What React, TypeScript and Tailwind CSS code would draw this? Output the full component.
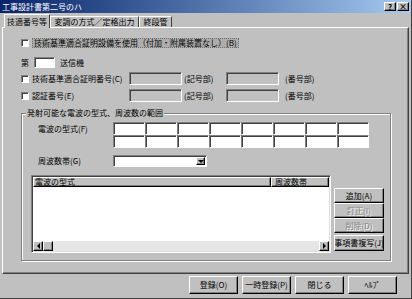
import React from 'react';

const raised =
  'bg-[#c0c0c0] border border-t-white border-l-white border-b-black border-r-black shadow-[inset_-1px_-1px_0_#808080]';
const sunken =
  'border border-t-[#808080] border-l-[#808080] border-b-white border-r-white shadow-[inset_1px_1px_0_#404040]';
const disabledText = 'text-[#808080] [text-shadow:1px_1px_0_#fff]';

const Check = () => <span className={`w-[8px] h-[8px] shrink-0 bg-white ${sunken}`} />;

const Arrow = ({ dir }: { dir: 'left' | 'right' | 'down' }) => {
  const pts = dir === 'left' ? '3,0 3,6 0,3' : dir === 'right' ? '0,0 0,6 3,3' : '0,0 6,0 3,3';
  const w = dir === 'down' ? 6 : 3;
  const h = dir === 'down' ? 3 : 6;
  return (
    <svg width={w} height={h} viewBox={`0 0 ${w} ${h}`}>
      <polygon points={pts} fill="#000" />
    </svg>
  );
};

const TitleBar = () => (
  <div className="h-[13px] flex items-center justify-between bg-gradient-to-r from-[#0a246a] to-[#a6caf0] pl-[2px] pr-[2px]">
    <span className="text-white text-[8px]">工事設計書第二号のハ</span>
    <div className="flex">
      <span className={`w-[12px] h-[9px] flex items-center justify-center text-[8px] font-bold ${raised}`}>?</span>
      <span className={`w-[12px] h-[9px] ml-[1px] flex items-center justify-center text-[8px] font-bold ${raised}`}>×</span>
    </div>
  </div>
);

const Tabs = () => (
  <div className="h-[14px] flex items-end pl-[4px]">
    <div className="relative z-10 -mb-[1px] w-[46px] h-[14px] bg-[#c0c0c0] border-t border-l border-t-white border-l-white border-r border-r-[#404040] flex items-center justify-center">
      技適番号等
    </div>
    <div className="w-[89px] h-[11px] border-t border-l border-t-white border-l-white border-r border-r-[#404040] flex items-center justify-center">
      変調の方式／定格出力
    </div>
    <div className="w-[33px] h-[11px] border-t border-l border-t-white border-l-white border-r border-r-[#404040] flex items-center justify-center">
      終段管
    </div>
  </div>
);

const NumberRow = ({ label }: { label: string }) => (
  <div className="flex items-center h-[13px] mt-[4px] ml-[18px]">
    <Check />
    <span className="ml-[3px] w-[97px]">{label}</span>
    <span className={`w-[53px] h-[13px] bg-[#c0c0c0] ${sunken}`} />
    <span className="ml-[2px] w-[42px]">(記号部)</span>
    <span className={`w-[53px] h-[13px] bg-[#c0c0c0] ${sunken}`} />
    <span className="ml-[6px]">(番号部)</span>
  </div>
);

const SideButton = ({ label, disabled, tall }: { label: string; disabled?: boolean; tall?: boolean }) => (
  <div
    className={`w-[50px] ${tall ? 'h-[16px] mt-[2px]' : 'h-[15px]'} flex items-center justify-center overflow-hidden whitespace-nowrap ${raised} ${disabled ? disabledText : ''}`}
  >
    {label}
  </div>
);

const ListView = () => (
  <div className="w-[300px] h-[78px] flex flex-col border border-t-[#808080] border-l-[#808080] border-b-white border-r-white shadow-[inset_1px_1px_0_#404040,inset_-1px_-1px_0_#dfdfdf] p-[1px]">
    <div className="h-[10px] flex shrink-0">
      <div className={`w-[238px] h-[10px] flex items-center pl-[1px] ${raised}`}>電波の型式</div>
      <div className={`w-[58px] h-[10px] flex items-center pl-[3px] ${raised}`}>周波数帯</div>
    </div>
    <div className="flex-1 bg-white" />
    <div className="h-[10px] flex shrink-0 bg-[#e6e6e6]">
      <div className={`w-[10px] h-[10px] flex items-center justify-center ${raised}`}>
        <Arrow dir="left" />
      </div>
      <div className={`w-[10px] h-[10px] ${raised}`} />
      <div className="flex-1" />
      <div className={`w-[10px] h-[10px] flex items-center justify-center ${raised}`}>
        <Arrow dir="right" />
      </div>
    </div>
  </div>
);

const GroupBox = () => (
  <div className="relative mt-[11px] ml-[18px] w-[370px] h-[148px] border border-[#808080] shadow-[inset_1px_1px_0_#fff,1px_1px_0_#fff]">
    <span className="absolute -top-[5px] left-[4px] bg-[#c0c0c0] px-[1px]">発射可能な電波の型式、周波数の範囲</span>

    <div className="flex mt-[8px] pl-[16px]">
      <span className="w-[75px] h-[13px] flex items-center">電波の型式(F)</span>
      <div className="grid grid-cols-8">
        {Array.from({ length: 16 }).map((_, i) => (
          <span key={i} className={`w-[32px] h-[13px] bg-white ${sunken}`} />
        ))}
      </div>
    </div>

    <div className="flex items-center mt-[7px] pl-[16px]">
      <span className="w-[75px]">周波数帯(G)</span>
      <div className={`w-[94px] h-[12px] bg-white flex justify-end p-[1px] ${sunken}`}>
        <span className={`w-[9px] h-full flex items-center justify-center ${raised}`}>
          <Arrow dir="down" />
        </span>
      </div>
    </div>

    <div className="flex mt-[8px] ml-[9px] gap-[3px]">
      <ListView />
      <div className="flex flex-col mt-[13px]">
        <SideButton label="追加(A)" />
        <SideButton label="訂正(I)" disabled />
        <SideButton label="削除(D)" disabled />
        <SideButton label="事項書複写(J)" tall />
      </div>
    </div>
  </div>
);

const Panel = () => (
  <div className="ml-[2px] w-[407px] h-[247px] border border-t-white border-l-white border-r-[#404040] border-b-[#404040] shadow-[inset_-1px_-1px_0_#808080] flex flex-col">
    <div className="flex items-center h-[10px] mt-[10px] ml-[18px]">
      <Check />
      <span className="ml-[3px] h-[10px] px-[2px] flex items-center bg-[#adadad] outline-1 outline-dotted outline-[#707070] -outline-offset-1">
        技術基準適合証明設備を使用（付加・附属装置なし）(B)
      </span>
    </div>

    <div className="flex items-center h-[11px] mt-[9px] ml-[18px]">
      <span>第</span>
      <span className={`ml-[5px] w-[21px] h-[11px] bg-white ${sunken}`} />
      <span className="ml-[5px]">送信機</span>
    </div>

    <NumberRow label="技術基準適合証明番号(C)" />
    <NumberRow label="認証番号(E)" />

    <GroupBox />
  </div>
);

const BottomButtons = () => (
  <div className="flex mt-[2px] pl-[189px] gap-[4px]">
    {['登録(O)', '一時登録(P)', '閉じる', 'ﾍﾙﾌﾟ'].map((t) => (
      <div key={t} className={`w-[49px] h-[18px] flex items-center justify-center ${raised}`}>
        {t}
      </div>
    ))}
  </div>
);

export default function App() {
  return (
    <div className="w-[412px] h-[299px] overflow-hidden bg-[#c0c0c0] text-black text-[8px] leading-none font-['Noto_Sans_CJK_JP','Noto_Sans_CJK_SC',sans-serif] flex flex-col border-r border-b border-r-[#404040] border-b-[#404040]">
      <TitleBar />
      <Tabs />
      <Panel />
      <BottomButtons />
    </div>
  );
}
